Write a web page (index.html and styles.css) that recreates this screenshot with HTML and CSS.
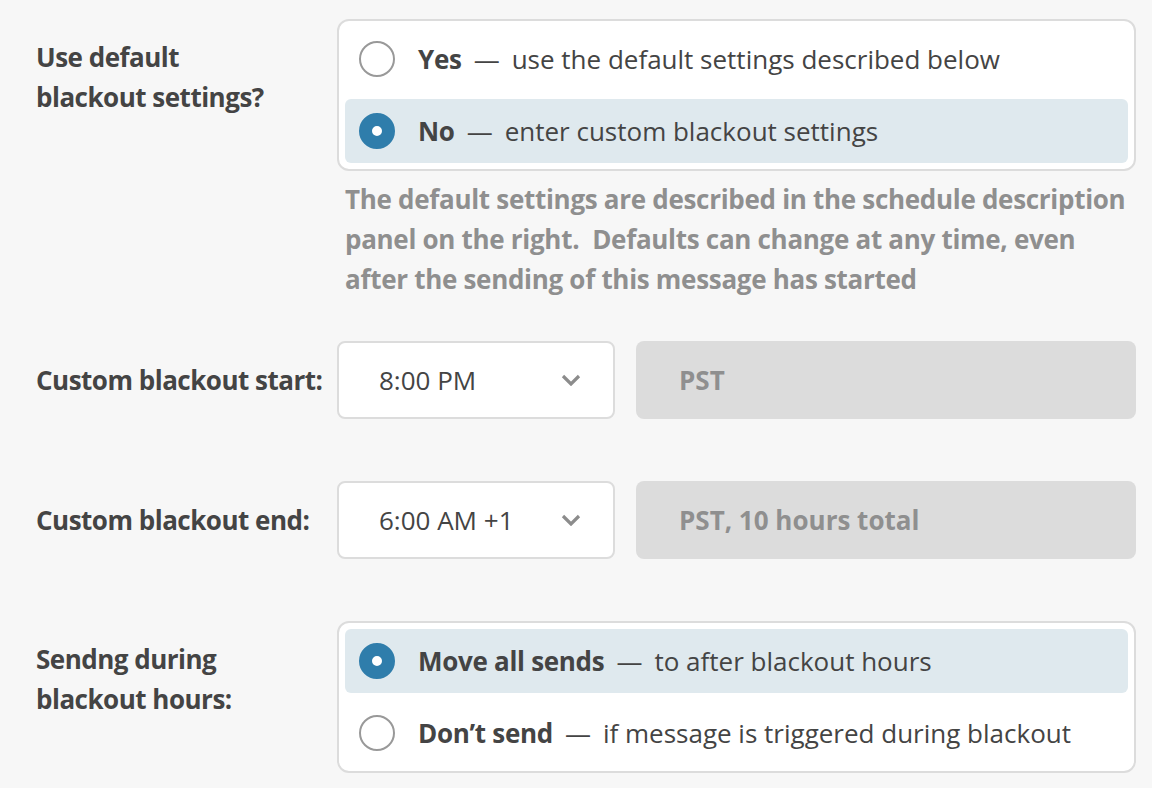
FILE: index.html
```html
<!DOCTYPE html>
<html lang="en">
<head>
    <meta charset="UTF-8">
    <meta name="viewport" content="width=device-width, initial-scale=1.0">
    <title>Blackout Settings</title>
    <link rel="stylesheet" href="styles.css">
</head>
<body>
    <div class="form">
        <div class="row">
            <div class="label">Use default<br>blackout settings?</div>
            <div class="field">
                <div class="choices">
                    <div class="choice">
                        <span class="radio"></span>
                        <b>Yes</b><span class="dash">—</span>use the default settings described below
                    </div>
                    <div class="choice selected">
                        <span class="radio"></span>
                        <b>No</b><span class="dash">—</span>enter custom blackout settings
                    </div>
                </div>
                <p class="hint">The default settings are described in the schedule description panel on the right.&nbsp; Defaults can change at any time, even after the sending of this message has started</p>
            </div>
        </div>

        <div class="row spaced-sm">
            <div class="label middle">Custom blackout start:</div>
            <div class="field inline">
                <div class="select">
                    <span>8:00 PM</span>
                    <svg class="chevron" width="20" height="12" viewBox="0 0 20 12"><path d="M2 2l8 8 8-8" fill="none" stroke="#8c8c8c" stroke-width="3.2"/></svg>
                </div>
                <div class="zone">PST</div>
            </div>
        </div>

        <div class="row spaced">
            <div class="label middle">Custom blackout end:</div>
            <div class="field inline">
                <div class="select">
                    <span>6:00 AM +1</span>
                    <svg class="chevron" width="20" height="12" viewBox="0 0 20 12"><path d="M2 2l8 8 8-8" fill="none" stroke="#8c8c8c" stroke-width="3.2"/></svg>
                </div>
                <div class="zone">PST, 10 hours total</div>
            </div>
        </div>

        <div class="row spaced">
            <div class="label">Sendng during<br>blackout hours:</div>
            <div class="field">
                <div class="choices">
                    <div class="choice selected">
                        <span class="radio"></span>
                        <b>Move all sends</b><span class="dash">—</span>to after blackout hours
                    </div>
                    <div class="choice">
                        <span class="radio"></span>
                        <b>Don’t send</b><span class="dash">—</span>if message is triggered during blackout
                    </div>
                </div>
            </div>
        </div>
    </div>
</body>
</html>
```

FILE: styles.css
```css
body {
    margin: 0;
    padding: 19px 16px 0 36px;
    background: #f7f7f7;
    font-family: "Open Sans", Lato, sans-serif;
    font-size: 26px;
    color: #444;
}
.row {
    display: grid;
    grid-template-columns: 301px 799px;
}
.spaced-sm {
    margin-top: 42px;
}
.spaced {
    margin-top: 62px;
}
.label {
    font-weight: 700;
    line-height: 40px;
    padding-top: 18px;
    letter-spacing: -0.5px;
}
.label.middle {
    padding-top: 0;
    align-self: center;
}
.choices {
    background: white;
    border: 2px solid #dcdcdc;
    border-radius: 12px;
    padding: 6px;
    display: flex;
    flex-direction: column;
    gap: 8px;
}
.choice {
    height: 64px;
    display: flex;
    align-items: center;
    padding-left: 14px;
    border-radius: 6px;
    white-space: nowrap;
}
.choice.selected {
    background: #dfe9ee;
}
.choice b {
    font-weight: 700;
    letter-spacing: -0.3px;
}
.radio {
    width: 32px;
    height: 32px;
    border: 2px solid #999;
    border-radius: 50%;
    margin-right: 23px;
    box-sizing: content-box;
    flex-shrink: 0;
}
.selected .radio {
    width: 10px;
    height: 10px;
    border: 13px solid #2f7dab;
    background: white;
}
.dash {
    margin: 0 12px;
}
.hint {
    margin: 8px 0 0 8px;
    font-weight: 700;
    color: #8f8f8f;
    line-height: 40px;
    letter-spacing: -0.3px;
}
.inline {
    display: flex;
    gap: 21px;
}
.select {
    width: 278px;
    height: 78px;
    box-sizing: border-box;
    background: white;
    border: 2px solid #dcdcdc;
    border-radius: 8px;
    display: flex;
    align-items: center;
    justify-content: space-between;
    padding: 0 32px 0 40px;
}
.zone {
    flex: 1;
    height: 78px;
    background: #dcdcdc;
    border-radius: 8px;
    display: flex;
    align-items: center;
    padding-left: 43px;
    font-weight: 700;
    color: #8f8f8f;
}
```
